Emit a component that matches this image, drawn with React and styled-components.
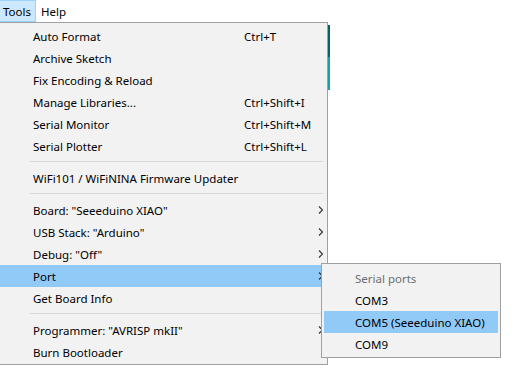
import React from 'react';
import styled, { createGlobalStyle } from 'styled-components';

const GlobalStyle = createGlobalStyle`
  html, body {
    margin: 0;
    padding: 0;
    background: #ffffff;
  }
  body {
    font-family: "Noto Sans", "Open Sans", sans-serif;
    font-size: 11.5px;
    color: #000;
  }
`;

const Window = styled.div`
  position: relative;
  width: 516px;
  height: 374px;
  overflow: hidden;
  background: #fff;
`;

const MenuBar = styled.div`
  display: flex;
  height: 23px;
  align-items: stretch;
`;

const MenuTitle = styled.div`
  display: flex;
  align-items: center;
  padding: 1px ${p => (p.$open ? '3px' : '4px')} 0;
  height: 22px;
  box-sizing: border-box;
  background: ${p => (p.$open ? '#cce8ff' : 'transparent')};
  border: 1px solid ${p => (p.$open ? '#99d1ff' : 'transparent')};
  border-left: ${p => (p.$open ? 'none' : '1px solid transparent')};
  width: ${p => p.$w}px;
`;

const Editor = styled.div`
  display: flex;
  padding-left: 328px;
  padding-top: 2px;
`;

const Strip = styled.div`
  display: flex;
  flex-direction: column;
  width: 2px;
`;

const StripPart = styled.div`
  height: ${p => p.$h}px;
  background: ${p => p.$c};
`;

const Popup = styled.div`
  position: absolute;
  left: ${p => p.$left}px;
  top: ${p => p.$top}px;
  width: ${p => p.$width}px;
  box-sizing: border-box;
  background: #f2f2f2;
  border: 1px solid #a0a0a0;
  padding: ${p => p.$pad};
`;

const Item = styled.div`
  display: flex;
  align-items: center;
  height: 22px;
  box-sizing: border-box;
  padding-top: 1px;
  padding-left: ${p => p.$indent}px;
  background: ${p => (p.$active ? '#91c9f7' : 'transparent')};
  color: ${p => (p.$muted ? '#6d6d6d' : '#000')};
  position: relative;
  white-space: nowrap;
`;

const Label = styled.span`
  width: 211px;
`;

const Shortcut = styled.span`
  flex: 1;
`;

const Arrow = styled.svg`
  position: absolute;
  left: 318px;
  top: 7px;
`;

const Separator = styled.div`
  height: 10px;
  display: flex;
  padding-left: 30px;
  padding-right: 4px;
  box-sizing: border-box;
  &::after {
    content: '';
    flex: 1;
    height: 1px;
    margin-top: 4px;
    background: #d7d7d7;
  }
`;

const Chevron = () => (
  <Arrow width="6" height="8" viewBox="0 0 6 8">
    <path d="M1 0.5 L4.5 4 L1 7.5" fill="none" stroke="#333" strokeWidth="1.1" />
  </Arrow>
);

const tools = [
  { label: 'Auto Format', key: 'Ctrl+T' },
  { label: 'Archive Sketch' },
  { label: 'Fix Encoding & Reload' },
  { label: 'Manage Libraries...', key: 'Ctrl+Shift+I' },
  { label: 'Serial Monitor', key: 'Ctrl+Shift+M' },
  { label: 'Serial Plotter', key: 'Ctrl+Shift+L' },
  'sep',
  { label: 'WiFi101 / WiFiNINA Firmware Updater' },
  'sep',
  { label: 'Board: "Seeeduino XIAO"', sub: true },
  { label: 'USB Stack: "Arduino"', sub: true },
  { label: 'Debug: "Off"', sub: true },
  { label: 'Port', sub: true, active: true },
  { label: 'Get Board Info' },
  'sep',
  { label: 'Programmer: "AVRISP mkII"', sub: true },
  { label: 'Burn Bootloader' },
];

const ports = [
  { label: 'Serial ports', muted: true },
  { label: 'COM3' },
  { label: 'COM5 (Seeeduino XIAO)', active: true },
  { label: 'COM9' },
];

export default function App() {
  return (
    <Window>
      <GlobalStyle />
      <MenuBar>
        <MenuTitle $open $w={36}>Tools</MenuTitle>
        <MenuTitle $w={40}>Help</MenuTitle>
      </MenuBar>
      <Editor>
        <Strip>
          <StripPart $h={32} $c="#006468" />
          <StripPart $h={33} $c="#17a1a5" />
        </Strip>
      </Editor>

      <Popup $left={-1} $top={22} $width={329} $pad="2px 0 1px 0">
        {tools.map((t, i) =>
          t === 'sep' ? (
            <Separator key={i} />
          ) : (
            <Item key={i} $indent={33} $active={t.active}>
              <Label>{t.label}</Label>
              {t.key && <Shortcut>{t.key}</Shortcut>}
              {t.sub && <Chevron />}
            </Item>
          )
        )}
      </Popup>

      <Popup $left={321} $top={263} $width={180} $pad="3px 2px 2px 2px">
        {ports.map((p, i) => (
          <Item key={i} $indent={31} $active={p.active} $muted={p.muted}>
            {p.label}
          </Item>
        ))}
      </Popup>
    </Window>
  );
}
